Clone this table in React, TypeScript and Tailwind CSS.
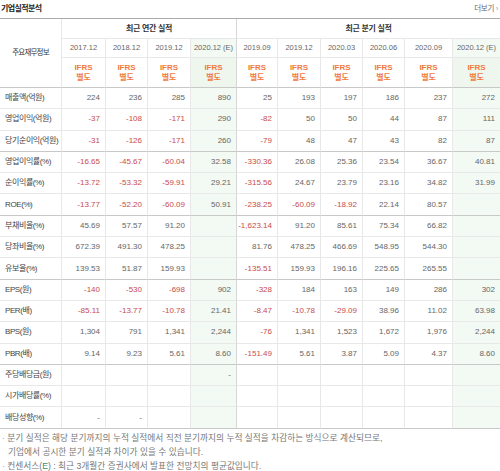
import React from "react";

type Row = { label: string; values: string[]; sep?: boolean };

const rows: Row[] = [
  { label: "매출액(억원)", values: ["224", "236", "285", "890", "25", "193", "197", "186", "237", "272"] },
  { label: "영업이익(억원)", values: ["-37", "-108", "-171", "290", "-82", "50", "50", "44", "87", "111"] },
  { label: "당기순이익(억원)", values: ["-31", "-126", "-171", "260", "-79", "48", "47", "43", "82", "87"], sep: true },
  { label: "영업이익률(%)", values: ["-16.65", "-45.67", "-60.04", "32.58", "-330.36", "26.08", "25.36", "23.54", "36.67", "40.81"] },
  { label: "순이익률(%)", values: ["-13.72", "-53.32", "-59.91", "29.21", "-315.56", "24.67", "23.79", "23.16", "34.82", "31.99"] },
  { label: "ROE(%)", values: ["-13.77", "-52.20", "-60.09", "50.91", "-238.25", "-60.09", "-18.92", "22.14", "80.57", ""], sep: true },
  { label: "부채비율(%)", values: ["45.69", "57.57", "91.20", "", "-1,623.14", "91.20", "85.61", "75.34", "66.82", ""] },
  { label: "당좌비율(%)", values: ["672.39", "491.30", "478.25", "", "81.76", "478.25", "466.69", "548.95", "544.30", ""] },
  { label: "유보율(%)", values: ["139.53", "51.87", "159.93", "", "-135.51", "159.93", "196.16", "225.65", "265.55", ""], sep: true },
  { label: "EPS(원)", values: ["-140", "-530", "-698", "902", "-328", "184", "163", "149", "286", "302"] },
  { label: "PER(배)", values: ["-85.11", "-13.77", "-10.78", "21.41", "-8.47", "-10.78", "-29.09", "38.96", "11.02", "63.98"] },
  { label: "BPS(원)", values: ["1,304", "791", "1,341", "2,244", "-76", "1,341", "1,523", "1,672", "1,976", "2,244"] },
  { label: "PBR(배)", values: ["9.14", "9.23", "5.61", "8.60", "-151.49", "5.61", "3.87", "5.09", "4.37", "8.60"], sep: true },
  { label: "주당배당금(원)", values: ["", "", "", "-", "", "", "", "", "", ""] },
  { label: "시가배당률(%)", values: ["", "", "", "", "", "", "", "", "", ""] },
  { label: "배당성향(%)", values: ["-", "-", "", "", "", "", "", "", "", ""], sep: true },
];

const years = ["2017.12", "2018.12", "2019.12", "2020.12 (E)", "2019.09", "2019.12", "2020.03", "2020.06", "2020.09", "2020.12 (E)"];

function rightBorder(ci: number) {
  if (ci === 9) return "border-r-0";
  if (ci === 3) return "border-r border-r-[#d6d6d6]";
  return "border-r border-r-[#e8e8e8]";
}

function bg(ci: number) {
  return ci === 3 || ci === 9 ? "bg-[#f3f9f3]" : "bg-white";
}

export default function App() {
  return (
    <div
      className="w-[500px] h-[471px] bg-white overflow-hidden text-[8px] text-[#555]"
      style={{ fontFamily: '"Liberation Sans", "Noto Sans CJK KR", sans-serif' }}
    >
      <div className="h-[18px] flex items-center justify-between pl-[1px] pr-[2px]">
        <span className="text-[8px] font-bold text-[#222] tracking-[-0.6px]">기업실적분석</span>
        <span className="text-[7.5px] text-[#666] tracking-[-0.3px]">
          더보기 <span className="text-[#999]">›</span>
        </span>
      </div>

      <div className="grid grid-cols-[62px_44px_42px_43px_46px_41px_43px_42px_42px_48px_47px] border-t border-t-[#aaaaaa]">
        {/* header */}
        <div className="row-span-3 flex items-center justify-center border-r border-r-[#e8e8e8] border-b border-b-[#c8c8c8] text-[#333] tracking-[-0.8px] text-[7.5px]">
          주요재무정보
        </div>
        <div className="col-span-4 h-[20px] flex items-center justify-center font-bold text-[#333] border-r border-r-[#d6d6d6] border-b border-b-[#e8e8e8] tracking-[-0.3px]">
          최근 연간 실적
        </div>
        <div className="col-span-6 h-[20px] flex items-center justify-center font-bold text-[#333] border-b border-b-[#e8e8e8] tracking-[-0.3px]">
          최근 분기 실적
        </div>
        {years.map((y, ci) => (
          <div
            key={"y" + ci}
            className={`h-[19px] flex items-center justify-center whitespace-nowrap text-[#666] text-[7.5px] border-b border-b-[#e8e8e8] ${rightBorder(ci)} ${bg(ci)}`}
          >
            {y}
          </div>
        ))}
        {years.map((_, ci) => (
          <div
            key={"i" + ci}
            className={`h-[30px] flex flex-col items-center justify-center font-bold text-[#f07b3f] leading-[10px] border-b border-b-[#c8c8c8] ${rightBorder(ci)} ${ci === 3 || ci === 9 ? "bg-[#eef6ee]" : "bg-white"}`}
          >
            <span>IFRS</span>
            <span>별도</span>
          </div>
        ))}

        {/* body */}
        {rows.map((r, ri) => (
          <React.Fragment key={"r" + ri}>
            <div
              className={`h-[21.3px] flex items-center pl-[5px] whitespace-nowrap text-[#444] tracking-[-0.4px] border-r border-r-[#e8e8e8] border-b ${r.sep ? "border-b-[#c8c8c8]" : "border-b-[#e8e8e8]"}`}
            >
              {r.label}
            </div>
            {r.values.map((v, ci) => (
              <div
                key={"c" + ri + "-" + ci}
                className={`h-[21.3px] flex items-center justify-end pr-[5px] whitespace-nowrap border-b ${r.sep ? "border-b-[#c8c8c8]" : "border-b-[#e8e8e8]"} ${rightBorder(ci)} ${bg(ci)} ${v.startsWith("-") && v.length > 1 ? "text-[#c94a4a]" : "text-[#666]"}`}
              >
                {v}
              </div>
            ))}
          </React.Fragment>
        ))}
      </div>

      <div className="pt-[2px] pl-[2px] text-[8.7px] leading-[14px] text-[#777] whitespace-nowrap">
        <div>
          <span className="text-[#8aa0b8]">·</span> 분기 실적은 해당 분기까지의 누적 실적에서 직전 분기까지의 누적 실적을 차감하는 방식으로 계산되므로,
        </div>
        <div className="pl-[6px]">기업에서 공시한 분기 실적과 차이가 있을 수 있습니다.</div>
        <div>
          <span className="text-[#8aa0b8]">·</span> 컨센서스(<span className="text-[#3f8f5f]">E</span>) : 최근 3개월간 증권사에서 발표한 전망치의 평균값입니다.
        </div>
      </div>
    </div>
  );
}
